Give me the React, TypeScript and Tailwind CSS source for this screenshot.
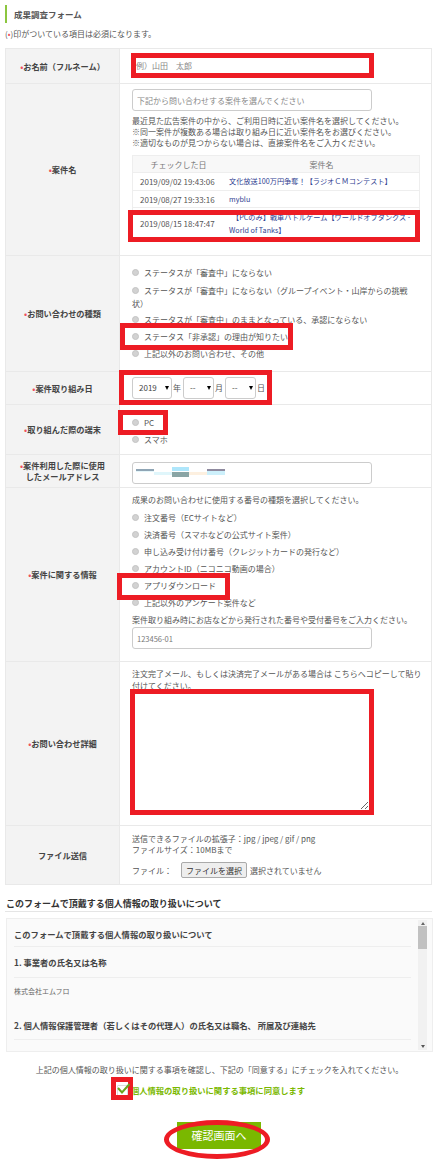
import type { ReactNode } from 'react';

const FONT = "font-['Noto_Sans_CJK_JP','Noto_Sans',sans-serif]";

function Req() {
  return <span className="text-[#f0505a]">•</span>;
}

function Row({ h, label, req = true, last, children }: { h: string; label: ReactNode; req?: boolean; last?: boolean; children: ReactNode }) {
  return (
    <div className={`flex ${h} ${last ? '' : 'border-b border-[#e9e9e9]'}`}>
      <div className="flex w-[114px] shrink-0 items-center justify-center border-r border-[#e9e9e9] bg-[#f3f3f3] text-center text-[8.2px] font-bold leading-[11px] text-[#444]">
        <span>
          {req && <Req />}
          {label}
        </span>
      </div>
      <div className="min-w-0 flex-1 pl-[12px]">{children}</div>
    </div>
  );
}

function Radio({ children }: { children: ReactNode }) {
  return (
    <div className="flex h-[17px] items-center gap-[5px]">
      <span className="h-[7px] w-[7px] shrink-0 rounded-full border border-[#c4c4c4] bg-[#d2d2d2]" />
      <span>{children}</span>
    </div>
  );
}

function DateSelect({ value, w }: { value: string; w: string }) {
  return (
    <div className={`flex h-[22px] ${w} items-center justify-between rounded-[3px] border border-[#ccc] pl-[6px] pr-[2px] text-[8px] text-[#444]`}>
      <span>{value}</span>
      <span className="h-0 w-0 border-x-[2.5px] border-t-[4px] border-x-transparent border-t-black" />
    </div>
  );
}

const caseRows = [
  { date: '2019/09/02 19:43:06', name: '文化放送100万円争奪！【ラジオＣＭコンテスト】', h: 'h-[18px]' },
  { date: '2019/08/27 19:33:16', name: 'myblu', h: 'h-[17px]' },
];

export default function App() {
  return (
    <div className={`relative h-[1159px] w-[438px] overflow-hidden bg-white text-[8px] leading-[11px] text-[#555] ${FONT}`}>
      <div className="px-[5px] pt-[5px]">
        <h1 className="flex h-[18px] items-center border-l-2 border-[#8cc63f] pl-[7px] text-[8.5px] font-bold text-[#555]">成果調査フォーム</h1>
        <p className="mt-[5px] h-[14px] text-[8px]">
          (<Req />)印がついている項目は必須になります。
        </p>

        <div className="mt-[6px] w-[427px] border border-[#e9e9e9]">
          <Row h="h-[35px]" label="お名前（フルネーム）">
            <input placeholder="例）山田　太郎" className="mt-[11px] w-[232px] pl-[4px] text-[8px] outline-none placeholder:text-[#888]" />
          </Row>

          <Row h="h-[172px]" label="案件名">
            <input
              placeholder="下記から問い合わせする案件を選んでください"
              className="mt-[5px] h-[22px] w-[240px] rounded-[3px] border border-[#ccc] px-[4px] text-[8px] outline-none placeholder:text-[#888]"
            />
            <p className="mt-[4px]">
              最近見た広告案件の中から、ご利用日時に近い案件名を選択してください。
              <br />
              ※同一案件が複数ある場合は取り組み日に近い案件名をお選びください。
              <br />
              ※適切なものが見つからない場合は、直接案件名をご入力ください。
            </p>
            <div className="mt-[7px] w-[288px] border border-[#eee]">
              <div className="flex h-[16px] items-center bg-[#f8f8f8] text-[#777]">
                <span className="w-[91px] text-center">チェックした日</span>
                <span className="flex-1 text-center">案件名</span>
              </div>
              {caseRows.map((r) => (
                <div key={r.date} className={`flex ${r.h} items-center border-t border-[#eee]`}>
                  <span className="w-[96px] pl-[7px]">{r.date}</span>
                  <span className="text-[7.2px] text-[#2f4191]">{r.name}</span>
                </div>
              ))}
              <div className="flex h-[32px] items-center border-t border-[#eee]">
                <span className="w-[96px] shrink-0 pl-[7px]">2019/08/15 18:47:47</span>
                <span className="whitespace-nowrap text-[7.2px] leading-[13px] text-[#2f4191]">
                  <span className="pl-[3px]">【PCのみ】戦車バトルゲーム【ワールドオブタンクス -</span>
                  <br />
                  World of Tanks】
                </span>
              </div>
            </div>
          </Row>

          <Row h="h-[116px]" label="お問い合わせの種類">
            <div className="pt-[8px]">
              <Radio>ステータスが「審査中」にならない</Radio>
              <div className="w-[280px] pt-[3px] leading-[13px]">
                <span className="mr-[5px] inline-block h-[7px] w-[7px] rounded-full border border-[#c4c4c4] bg-[#d2d2d2]" />
                ステータスが「審査中」にならない（グループイベント・山岸からの挑戦状）
              </div>
              <div className="mt-[1px]">
                <Radio>ステータスが「審査中」のままとなっている、承認にならない</Radio>
              </div>
              <Radio>ステータス「非承認」の理由が知りたい</Radio>
              <Radio>上記以外のお問い合わせ、その他</Radio>
            </div>
          </Row>

          <Row h="h-[33px]" label="案件取り組み日">
            <div className="flex h-full items-center gap-[1px] pb-[1px]">
              <DateSelect value="2019" w="w-[40px]" />
              <span className="mr-[1px]">年</span>
              <DateSelect value="--" w="w-[31px]" />
              <span className="mr-[1px]">月</span>
              <DateSelect value="--" w="w-[31px]" />
              <span>日</span>
            </div>
          </Row>

          <Row h="h-[50px]" label="取り組んだ際の端末">
            <div className="pt-[9px]">
              <Radio>PC</Radio>
              <Radio>スマホ</Radio>
            </div>
          </Row>

          <Row
            h="h-[33px]"
            label={
              <>
                案件利用した際に使用
                <br />
                したメールアドレス
              </>
            }
          >
            <div className="relative mt-[7px] h-[22px] w-[240px] rounded-[3px] border border-[#ccc]">
              <svg width="92" height="12" viewBox="0 0 92 12" className="ml-[2px] mt-[4px]">
                <rect x="1" y="2" width="18" height="2" fill="#8fa5b5" />
                <rect x="1" y="4" width="18" height="1" fill="#e6f7fb" />
                <rect x="19" y="5" width="18" height="3" fill="#e0f6fb" />
                <rect x="37" y="0" width="17" height="4" fill="#aee6fb" />
                <rect x="37" y="5" width="17" height="5" fill="#8aa5a5" />
                <rect x="54" y="5" width="18" height="3" fill="#fdf0e0" />
                <rect x="72" y="2" width="18" height="2" fill="#8f8a9f" />
                <rect x="72" y="4" width="18" height="4" fill="#cdf0fb" />
              </svg>
            </div>
          </Row>

          <Row h="h-[174px]" label="案件に関する情報">
            <p className="pt-[6px]">成果のお問い合わせに使用する番号の種類を選択してください。</p>
            <div className="mt-[4px]">
              <Radio>注文番号（ECサイトなど）</Radio>
              <Radio>決済番号（スマホなどの公式サイト案件）</Radio>
              <Radio>申し込み受け付け番号（クレジットカードの発行など）</Radio>
              <Radio>アカウントID（ニコニコ動画の場合）</Radio>
              <Radio>アプリダウンロード</Radio>
              <Radio>上記以外のアンケート案件など</Radio>
            </div>
            <p className="mt-[3px]">案件取り組み時にお店などから発行された番号や受付番号をご入力ください。</p>
            <input
              placeholder="123456-01"
              className="mt-[2px] h-[22px] w-[240px] rounded-[3px] border border-[#ccc] px-[4px] text-[7.5px] outline-none placeholder:text-[#777]"
            />
          </Row>

          <Row h="h-[164px]" label="お問い合わせ詳細">
            <p className="w-[290px] pt-[6px] leading-[12px]">注文完了メール、もしくは決済完了メールがある場合は こちらへコピーして貼り付けてください。</p>
            <textarea className="ml-[3px] mt-[2px] block h-[116px] w-[234px] outline-none" />
          </Row>

          <Row h="h-[58px]" label="ファイル送信" req={false} last>
            <p className="pt-[7px]">
              送信できるファイルの拡張子：jpg / jpeg / gif / png
              <br />
              ファイルサイズ：10MBまで
            </p>
            <div className="mt-[7px] flex items-center">
              <span className="w-[49px]">ファイル：</span>
              <button className="h-[16px] w-[66px] rounded-[2px] border border-[#aaa] bg-[#eee] text-[8px] text-[#333]">ファイルを選択</button>
              <span className="ml-[3px]">選択されていません</span>
            </div>
          </Row>
        </div>

        <h2 className="mt-[12px] h-[13px] pl-[1px] text-[9px] font-bold leading-[13px] text-[#333]">このフォームで頂戴する個人情報の取り扱いについて</h2>
        <div className="mt-[1px] w-[427px] border-t border-[#e5e5e5]" />

        <div className="mt-[6px] ml-[1px] flex h-[134px] w-[427px] border border-[#eee] bg-[#fafafa]">
          <div className="w-[411px] shrink-0 px-[7px] text-[8.3px] font-bold text-[#444]">
            <div className="flex h-[28px] items-end border-b border-[#eee] pb-[6px]">このフォームで頂戴する個人情報の取り扱いについて</div>
            <div className="flex h-[31px] items-center border-b border-[#eee]">1. 事業者の氏名又は名称</div>
            <p className="mt-[8px] text-[7px] font-normal text-[#666]">株式会社エムフロ</p>
            <div className="mt-[22px] flex h-[21px] items-start border-b border-[#eee] leading-[13px]">2. 個人情報保護管理者（若しくはその代理人）の氏名又は職名、 所属及び連絡先</div>
          </div>
          <div className="my-[1px] flex w-[9px] flex-col items-center justify-between bg-[#f1f1f1] py-[2px]">
            <span className="h-0 w-0 border-x-[2px] border-b-[3px] border-x-transparent border-b-[#666]" />
            <span className="mb-auto mt-[1px] h-[23px] w-full bg-[#c1c1c1]" />
            <span className="h-0 w-0 border-x-[2px] border-t-[3px] border-x-transparent border-t-[#555]" />
          </div>
        </div>

        <p className="mt-[12px] pl-[1px] text-center text-[8px]">上記の個人情報の取り扱いに関する事項を確認し、下記の「同意する」にチェックを入れてください。</p>

        <div className="mt-[9px] flex h-[12px] items-center justify-center whitespace-nowrap pr-[16px] text-[8.3px] font-bold text-[#7ab800]">
          <span className="mr-[3px] h-[11px] w-[11px] shrink-0 rounded-[1px] border border-[#ddd] bg-white" />
          <span>個人情報の取り扱いに関する事項に同意します</span>
        </div>

        <div className="mt-[26px] flex justify-center">
          <button className="h-[27px] w-[84px] bg-[#7ab800] text-[11px] text-white">確認画面へ</button>
        </div>
      </div>

      {/* annotations drawn over the capture */}
      <div className="absolute left-[131px] top-[53px] h-[25px] w-[243px] border-[5px] border-[#ed1c24]" />
      <div className="absolute left-[128px] top-[210px] h-[32px] w-[292px] border-[5px] border-[#ed1c24]" />
      <div className="absolute left-[120px] top-[323px] h-[27px] w-[173px] border-[5px] border-[#ed1c24]" />
      <div className="absolute left-[119px] top-[370px] h-[35px] w-[153px] border-[5px] border-[#ed1c24]" />
      <div className="absolute left-[118px] top-[410px] h-[25px] w-[50px] border-[5px] border-[#ed1c24]" />
      <div className="absolute left-[117px] top-[573px] h-[27px] w-[113px] border-[5px] border-[#ed1c24]" />
      <div className="absolute left-[130px] top-[689px] h-[126px] w-[244px] border-[5px] border-[#ed1c24]" />
      <div className="absolute left-[111px] top-[1077px] h-[23px] w-[22px] border-[5px] border-[#ed1c24]" />
      <svg width="15" height="13" viewBox="0 0 15 13" className="absolute left-[116px] top-[1082px]">
        <path d="M2 6 L6 10.5 L13.5 2" fill="none" stroke="#6aa51e" strokeWidth="2" />
      </svg>
      <div className="absolute left-[164px] top-[1120px] h-[39px] w-[106px] rounded-[50%] border-[5px] border-[#ed1c24]" />
    </div>
  );
}
